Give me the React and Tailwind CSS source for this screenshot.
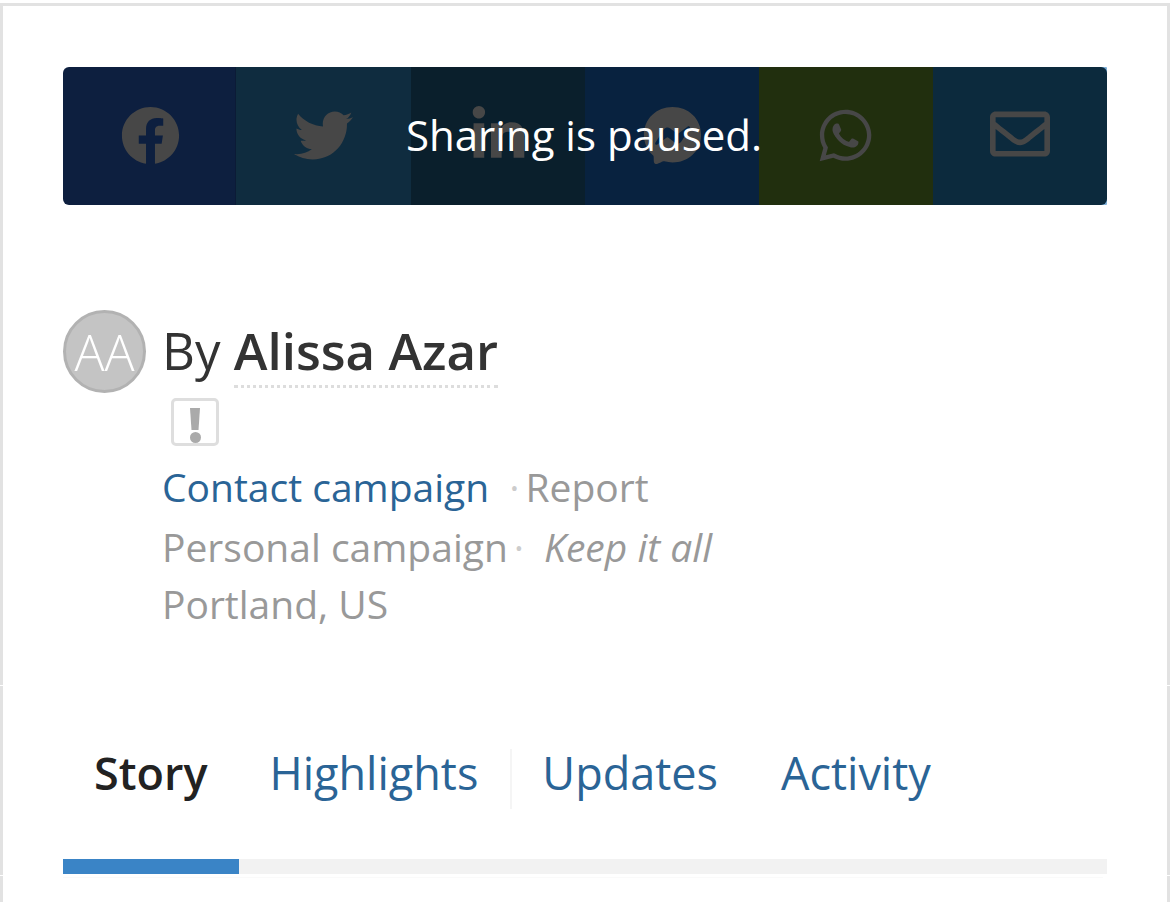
import React from "react";
import { FaFacebook, FaTwitter, FaLinkedinIn, FaFacebookMessenger, FaWhatsapp, FaRegEnvelope } from "react-icons/fa";

export default function App() {
  return (
    <div className="relative w-[1170px] h-[902px] bg-white overflow-hidden font-['Open_Sans',sans-serif]">
      <div className="h-[902px] mt-[3px] border-t-[3px] border-x-[3px] border-[#e2e2e2] pt-[61px] px-[60px]">
        <div className="relative h-[138px] w-[1044px]">
          <div className="absolute right-0 top-0 bottom-0 w-[12px] rounded-[1px] bg-[#7fb0d8]"></div>
          <div className="relative flex h-full rounded-[6px] overflow-hidden">
            <div className="w-[173px] pb-[2px] pl-[2px] flex items-center justify-center text-[#474747] bg-[#0d1f3f] border-r border-[#0b1b36]"><FaFacebook size={59} /></div>
            <div className="w-[175px] pb-[2px] flex items-center justify-center text-[#474747] bg-[#0f2c3f]"><FaTwitter size={59} /></div>
            <div className="w-[174px] pb-[2px] flex items-center justify-center text-[#474747] bg-[#0a1f2c]"><FaLinkedinIn size={59} /></div>
            <div className="w-[174px] pb-[2px] flex items-center justify-center text-[#474747] bg-[#08223f]"><FaFacebookMessenger size={59} /></div>
            <div className="w-[174px] pb-[2px] pr-[1px] flex items-center justify-center text-[#474747] bg-[#212f0e]"><FaWhatsapp size={59} /></div>
            <div className="w-[174px] pb-[4px] flex items-center justify-center text-[#474747] bg-[#0c2a3d]"><FaRegEnvelope size={60} /></div>
            <div className="absolute inset-0 flex items-center justify-center text-white text-[42px] leading-none pr-[2px] pb-[2px]">Sharing is paused.</div>
          </div>
        </div>

        <div className="flex mt-[105px]">
          <div className="w-[83px] h-[83px] rounded-full bg-[#c4c4c4] border-[3px] border-[#b2b2b2] flex items-center justify-center text-white text-[50px] font-light leading-none shrink-0">AA</div>
          <div className="ml-[16px] flex flex-col">
            <div className="text-[51px] leading-[60px] text-[#333] whitespace-nowrap mt-[10px] h-[60px]">
              By <span className="font-semibold border-b-[3px] border-dotted border-[#dddddd]">Alissa Azar</span>
            </div>
            <div className="ml-[9px] mt-[18px] w-[48px] h-[48px] rounded-[5px] border-[3px] border-[#dedede] flex flex-col items-center justify-end gap-[2px]">
              <div className="w-[10px] h-[22px] bg-[#aaaaaa] [clip-path:polygon(0_0,100%_0,85%_100%,15%_100%)]"></div>
              <div className="w-[11px] h-[11px] rounded-full bg-[#aaaaaa]"></div>
            </div>
            <div className="text-[39px] leading-[50px] mt-[16px] whitespace-nowrap text-[#999]">
              <span className="text-[#2a6496]">Contact campaign</span>
              <span className="ml-[20px] text-[#cccccc]">·</span>
              <span className="ml-[6px]">Report</span>
            </div>
            <div className="text-[39px] leading-[50px] mt-[10px] whitespace-nowrap text-[#999]">
              Personal campaign<span className="ml-[6px] text-[#cccccc]">·</span>
              <span className="ml-[20px] italic">Keep it all</span>
            </div>
            <div className="text-[39px] leading-[50px] mt-[7px] whitespace-nowrap text-[#999]">Portland, US</div>
          </div>
        </div>

        <div className="flex items-center mt-[114px] ml-[31px] text-[45px] leading-[60px] whitespace-nowrap h-[60px]">
          <span className="font-semibold text-[#222]">Story</span>
          <span className="ml-[62px] text-[#2a6496]">Highlights</span>
          <div className="ml-[32px] mt-[12px] w-[2px] h-[60px] bg-[#f5f5f5]"></div>
          <span className="ml-[30px] text-[#2a6496]">Updates</span>
          <span className="ml-[63px] text-[#2a6496]">Activity</span>
        </div>

        <div className="mt-[56px] h-[15px] w-[1044px] bg-[#f2f2f2]">
          <div className="h-full w-[176px] bg-[#3a84c6]"></div>
        </div>
        <div className="mt-[3px] h-px w-[1040px] bg-[#fafafa]"></div>
      </div>
      <div className="absolute left-0 top-[685px] w-[3px] h-px bg-white"></div>
      <div className="absolute left-0 top-[875px] w-[3px] h-px bg-white"></div>
      <div className="absolute right-0 top-[685px] w-[3px] h-px bg-white"></div>
      <div className="absolute right-0 top-[875px] w-[3px] h-px bg-white"></div>
    </div>
  );
}
